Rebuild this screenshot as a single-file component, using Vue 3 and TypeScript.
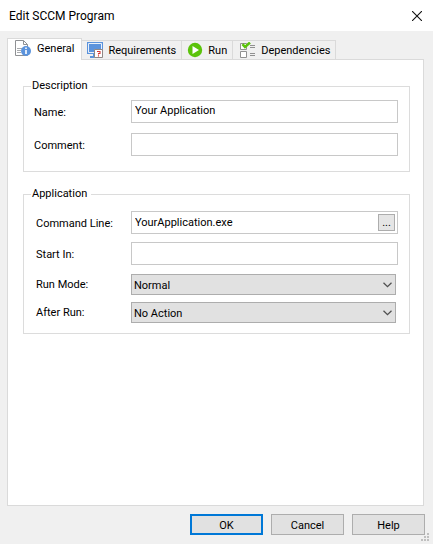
<script setup lang="ts">
import { ref } from 'vue'

type TabId = 'general' | 'requirements' | 'run' | 'dependencies'

const tabs: { id: TabId; label: string }[] = [
  { id: 'general', label: 'General' },
  { id: 'requirements', label: 'Requirements' },
  { id: 'run', label: 'Run' },
  { id: 'dependencies', label: 'Dependencies' },
]

const activeTab = ref<TabId>('general')
const name = ref('Your Application')
const comment = ref('')
const commandLine = ref('YourApplication.exe')
const startIn = ref('')
const runMode = ref('Normal')
const afterRun = ref('No Action')

const runModes = ['Normal', 'Minimized', 'Maximized', 'Hidden']
const afterRunActions = ['No Action', 'Restart', 'Log Off']
</script>

<template>
  <main class="dialog">
    <header class="titlebar">
      <h1 class="title">Edit SCCM Program</h1>
      <button class="close" type="button" aria-label="Close">
        <svg width="10" height="10" viewBox="0 0 10 10">
          <path d="M0 0L10 10M10 0L0 10" stroke="#111" stroke-width="1.1" />
        </svg>
      </button>
    </header>

    <form class="body" @submit.prevent>
      <div class="tabs" role="tablist">
        <button
          v-for="tab in tabs"
          :key="tab.id"
          class="tab"
          :class="{ active: tab.id === activeTab }"
          type="button"
          role="tab"
          :aria-selected="tab.id === activeTab"
          @click="activeTab = tab.id"
        >
          <svg v-if="tab.id === 'general'" width="16" height="16" viewBox="0 0 16 16">
            <path d="M.5 .5H8.5L12.5 4.5V15.5H.5Z" fill="#fff" stroke="#8f9194" />
            <path d="M8.5 .5V4.5H12.5" fill="none" stroke="#8f9194" />
            <path d="M2 8.5H7M2 10.5H6M2 12.5H6" stroke="#a9abae" />
            <circle cx="11" cy="11" r="5" fill="#5b93dc" />
            <path d="M11 7.5V9M11 10V14" stroke="#fff" stroke-width="1.6" />
          </svg>
          <svg v-else-if="tab.id === 'requirements'" width="16" height="16" viewBox="0 0 16 16">
            <path d="M0 0H16V12H0Z" fill="#5b93dc" />
            <path d="M1.5 1.5H14.5V10.5H1.5Z" fill="#5b93dc" stroke="#e8f0fa" />
            <path d="M6 12H8V14H6ZM3 14H8V16H3Z" fill="#5b93dc" />
            <path d="M7.5 7.5H15.5V15.5H7.5Z" fill="#fff" stroke="#8f8886" />
            <path d="M10 9.5H13V11.5H11.5V12.5M11.5 13.2V14.5" fill="none" stroke="#d63a35" stroke-width="1.1" />
          </svg>
          <svg v-else-if="tab.id === 'run'" width="16" height="16" viewBox="0 0 16 16">
            <circle cx="8" cy="8" r="7.2" fill="#5bc30b" />
            <path d="M5.5 4V12L12 8Z" fill="#fff" />
          </svg>
          <svg v-else width="18" height="16" viewBox="-2 0 18 16">
            <path d="M.5 1.5H6.5V7.5H.5ZM.5 9.5H6.5V15.5H.5Z" fill="#fff" stroke="#909090" />
            <path d="M10 3.5H15M10 5.5H15M10 11.5H15M10 13.5H15" stroke="#909090" />
            <path d="M2.5 2.2L5 5L10 .6" fill="none" stroke="#5bc30b" stroke-width="2.6" />
          </svg>
          <span class="tab-label">{{ tab.label }}</span>
        </button>
      </div>

      <section class="panel" role="tabpanel">
        <fieldset class="group">
          <legend>Description</legend>
          <div class="fields">
            <label for="name">Name:</label>
            <input id="name" v-model="name" class="box" type="text" />
            <label for="comment">Comment:</label>
            <input id="comment" v-model="comment" class="box" type="text" />
          </div>
        </fieldset>

        <fieldset class="group application">
          <legend>Application</legend>
          <div class="fields">
            <label for="command">Command Line:</label>
            <div class="box browse">
              <input id="command" v-model="commandLine" type="text" />
              <button class="more" type="button" aria-label="Browse">...</button>
            </div>
            <label for="start">Start In:</label>
            <input id="start" v-model="startIn" class="box" type="text" />
          </div>
          <div class="fields choices">
            <label for="mode">Run Mode:</label>
            <div class="picker">
              <select id="mode" v-model="runMode">
                <option v-for="mode in runModes" :key="mode">{{ mode }}</option>
              </select>
              <svg class="arrow" width="9" height="6" viewBox="0 0 9 6">
                <path d="M.5 .8L4.5 4.6L8.5 .8" fill="none" stroke="#505050" stroke-width="1.3" />
              </svg>
            </div>
            <label for="after">After Run:</label>
            <div class="picker">
              <select id="after" v-model="afterRun">
                <option v-for="action in afterRunActions" :key="action">{{ action }}</option>
              </select>
              <svg class="arrow" width="9" height="6" viewBox="0 0 9 6">
                <path d="M.5 .8L4.5 4.6L8.5 .8" fill="none" stroke="#505050" stroke-width="1.3" />
              </svg>
            </div>
          </div>
        </fieldset>
      </section>

      <footer class="actions">
        <button class="action primary" type="submit">OK</button>
        <button class="action" type="button">Cancel</button>
        <button class="action" type="button">Help</button>
      </footer>
    </form>

    <svg class="grip" width="8" height="8" viewBox="0 0 8 8">
      <path d="M6 0H8V2H6ZM3 3H5V5H3ZM6 3H8V5H6ZM0 6H2V8H0ZM3 6H5V8H3ZM6 6H8V8H6Z" fill="#bfbfbf" />
    </svg>
  </main>
</template>

<style>
body {
  background: #f0f0f0;
}
</style>

<style scoped>
.dialog,
.dialog * {
  box-sizing: border-box;
}

.dialog {
  position: relative;
  display: flex;
  flex-direction: column;
  min-height: 100vh;
  background: #f0f0f0;
  color: #000;
  font: 11px/14px Tahoma, Roboto, sans-serif;
}

button,
input,
select {
  margin: 0;
  color: inherit;
  font: inherit;
}

.titlebar {
  display: flex;
  align-items: center;
  justify-content: space-between;
  height: 31px;
  padding: 0 11px 0 9px;
  background: #fff;
}

.title {
  margin: 0;
  font: 12px/16px "Segoe UI", Roboto, sans-serif;
}

.close {
  display: flex;
  padding: 0;
  border: 0;
  background: none;
}

.body {
  display: flex;
  flex: 1;
  flex-direction: column;
  padding: 7px 8px 9px 7px;
}

.tabs {
  display: flex;
  align-items: flex-end;
  height: 22px;
  margin-bottom: -1px;
}

.tab {
  display: flex;
  align-items: center;
  gap: 5px;
  height: 20px;
  padding: 0 5px;
  border: 1px solid #dadada;
  border-left: 0;
  background: #f0f0f0;
}

.tab-label {
  padding-top: 2px;
}

.tab.active {
  position: relative;
  gap: 6px;
  height: 22px;
  padding: 0 7px 3px;
  border-left: 1px solid #dadada;
  border-bottom: 0;
  background: #fff;
}

.panel {
  flex: 1;
  margin-right: 1px;
  padding: 19px 13px 20px 15px;
  border: 1px solid #dadada;
  background: #fff;
}

.group {
  min-width: 0;
  margin: 0;
  padding: 7px 11px 15px 10px;
  border: 1px solid #dcdcdc;
}

.group.application {
  margin-top: 15px;
  padding: 10px 11px 10px 12px;
}

legend {
  margin-left: -3px;
  padding: 0 4px 0 1px;
}

.application legend {
  margin-left: -5px;
}

.fields {
  display: grid;
  grid-template-columns: 97px minmax(0, 1fr);
  row-gap: 10px;
  align-items: center;
}

.fields label {
  padding-top: 2px;
}

.application .fields {
  grid-template-columns: 95px minmax(0, 1fr);
  row-gap: 8px;
}

.application .choices {
  row-gap: 7px;
  margin-top: 9px;
  padding-right: 2px;
}

.choices label {
  padding-top: 0;
}

.box {
  width: 100%;
  height: 23px;
  padding: 0 3px 2px;
  border: 1px solid #c8c8c8;
  border-radius: 0;
  background: #fff;
}

.box:focus,
.browse input:focus {
  outline: none;
}

.browse {
  display: flex;
  padding: 0;
}

.browse input {
  flex: 1;
  min-width: 0;
  padding: 0 3px;
  border: 0;
  background: none;
}

.more {
  width: 17px;
  height: 17px;
  margin: 2px;
  padding: 0;
  border: 1px solid #adadad;
  background: #e5e5e5;
}

.picker {
  position: relative;
}

select {
  display: block;
  width: 100%;
  height: 21px;
  padding: 2px 20px 0 2px;
  border: 1px solid #adadad;
  border-radius: 0;
  background: #e1e1e1;
  appearance: none;
}

.arrow {
  position: absolute;
  top: 8px;
  right: 4px;
  pointer-events: none;
}

.actions {
  display: flex;
  justify-content: flex-end;
  gap: 8px;
  margin-top: 8px;
}

.action {
  width: 73px;
  height: 21px;
  padding: 2px 0 0;
  border: 1px solid #adadad;
  background: #e1e1e1;
}

.primary {
  border: 2px solid #0078d7;
}

.grip {
  position: absolute;
  right: 4px;
  bottom: 3px;
}
</style>
